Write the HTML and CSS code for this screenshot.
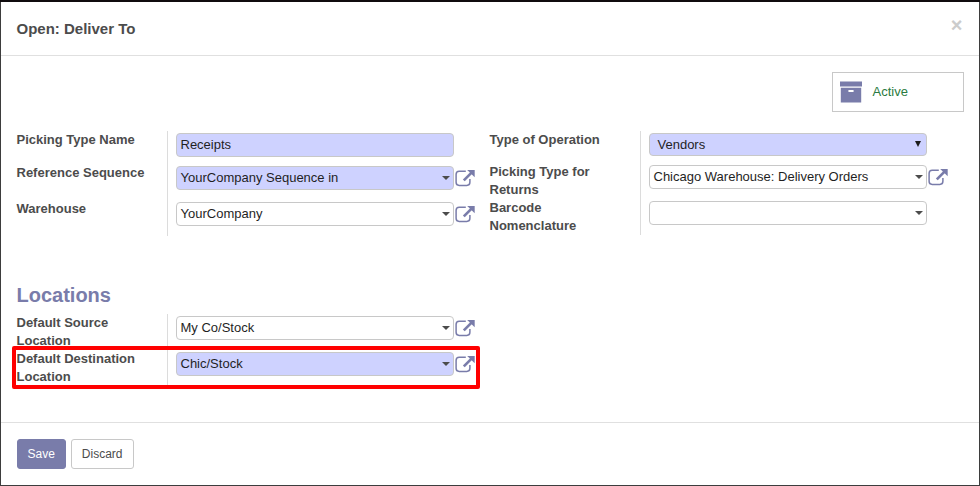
FILE: index.html
```html
<!DOCTYPE html>
<html lang="en">
<head>
<meta charset="utf-8">
<title>Open: Deliver To</title>
<link rel="stylesheet" href="styles.css">
</head>
<body>
<svg class="defs" width="0" height="0">
  <symbol id="ext" viewBox="0 0 20 18">
    <path d="M10.8 2.3H4.2Q1.1 2.3 1.1 5.4V13.3Q1.1 16.4 4.2 16.4H11.8Q14.9 16.4 14.9 13.3V10" fill="none" stroke="#797caa" stroke-width="1.5"/>
    <path d="M8.8 11.4L16.8 3.4" fill="none" stroke="#797caa" stroke-width="2.6"/>
    <path d="M12.2 .9H19.7V8.2Z" fill="#797caa"/>
  </symbol>
</svg>
<div class="modal">
  <header class="modal-header">
    <h1>Open: Deliver To</h1>
    <span class="close">×</span>
  </header>
  <main class="modal-body">
    <div class="button-box">
      <div class="stat">
        <svg width="22" height="22" viewBox="0 0 22 22"><path d="M0 .5H22V5.5H0Z M.8 6.7H21.2V21.5H.8Z" fill="#797caa"/><rect x="8.2" y="9" width="5.6" height="2" rx=".9" fill="#fff"/></svg>
        <span>Active</span>
      </div>
    </div>
    <div class="groups">
      <div class="group">
        <div class="row short"><label>Picking Type Name</label><div class="cell"><div class="field required">Receipts</div></div></div>
        <div class="row"><label>Reference Sequence</label><div class="cell"><div class="field required drop">YourCompany Sequence in</div><svg class="ext"><use href="#ext"/></svg></div></div>
        <div class="row"><label>Warehouse</label><div class="cell"><div class="field drop">YourCompany</div><svg class="ext"><use href="#ext"/></svg></div></div>
      </div>
      <div class="group">
        <div class="row select-row"><label>Type of Operation</label><div class="cell"><div class="field required select"><span>Vendors</span><svg width="6" height="6" viewBox="0 0 6 6"><path d="M0 0H6L3 6Z" fill="#1c1c1c"/></svg></div></div></div>
        <div class="row"><label>Picking Type for Returns</label><div class="cell"><div class="field drop">Chicago Warehouse: Delivery Orders</div><svg class="ext"><use href="#ext"/></svg></div></div>
        <div class="row"><label>Barcode Nomenclature</label><div class="cell"><div class="field drop"></div></div></div>
      </div>
    </div>
    <h2>Locations</h2>
    <div class="group">
      <div class="row"><label>Default Source Location</label><div class="cell"><div class="field drop">My Co/Stock</div><svg class="ext"><use href="#ext"/></svg></div></div>
      <div class="row marked"><label>Default Destination Location</label><div class="cell"><div class="field required drop">Chic/Stock</div><svg class="ext"><use href="#ext"/></svg></div></div>
    </div>
  </main>
  <footer class="modal-footer">
    <button class="btn primary">Save</button>
    <button class="btn">Discard</button>
  </footer>
</div>
</body>
</html>
```
FILE: styles.css
```css
*, *::after { box-sizing: border-box; }
body {
  margin: 0;
  height: 486px;
  padding: 2px 1px 1px;
  background: linear-gradient(#100c0e 0 2px, #3d3d3d 2px);
  font: 13px/18px "Liberation Sans", Arial, sans-serif;
  color: #4c4c4c;
  overflow: hidden;
}
.defs { position: absolute; }
.modal {
  height: 483px;
  background: #fff;
  display: flex;
  flex-direction: column;
}
.modal-header {
  height: 54px;
  flex: none;
  display: flex;
  align-items: center;
  justify-content: space-between;
  padding: 0 16.5px 0 15.5px;
  border-bottom: 1px solid #e0e0e0;
}
h1 { margin: 0; font-size: 15px; line-height: 20px; }
.close {
  font-size: 20px;
  line-height: 20px;
  font-weight: bold;
  color: #ccc;
  margin-bottom: 7px;
}
.modal-body { flex: 1; padding: 16px 15px 0 15.5px; }
.button-box { display: flex; justify-content: flex-end; height: 59px; }
.stat {
  width: 132px;
  height: 40px;
  border: 1px solid #c8c8c8;
  display: flex;
  align-items: center;
  gap: 10.5px;
  padding-left: 7px;
  color: #2a7b41;
}
.groups { display: flex; height: 153px; align-items: flex-start; }
.group { width: 473px; }
.row { display: flex; height: 36px; }
.short { height: 33px; }
.select-row { height: 32px; }
label { width: 150.5px; padding-right: 14px; font-weight: bold; }
.cell {
  flex: 1;
  display: flex;
  align-items: flex-start;
  border-left: 1px solid #dcdcdc;
  padding: 2px 0 0 8px;
}
.field {
  position: relative;
  width: 278px;
  height: 24px;
  border: 1px solid #c8c8c8;
  border-radius: 4px;
  padding: 0 3.5px;
  line-height: 22px;
  color: #1f1f1f;
  background: #fff;
}
.required { background: #ced2ff; }
.drop::after {
  content: "";
  position: absolute;
  right: 3px;
  top: 9px;
  border: 4px solid transparent;
  border-top-color: #4c4c4c;
  border-bottom: 0;
}
.select {
  height: 23px;
  display: flex;
  justify-content: space-between;
  padding: 0 5px 0 7.5px;
}
.select svg { margin-top: 7px; }
.ext { width: 20px; height: 18px; margin: 3px 0 0 1px; }
h2 { margin: 0; height: 30px; font-size: 20px; line-height: 22px; color: #797caa; }
.marked { position: relative; }
.marked::after {
  content: "";
  position: absolute;
  left: -4.5px;
  top: -4px;
  width: 468px;
  height: 43px;
  border: 4px solid #f00;
  border-radius: 2px;
}
.modal-footer {
  height: 63px;
  flex: none;
  display: flex;
  gap: 5px;
  padding: 16px 16px 0;
  border-top: 1px solid #e0e0e0;
}
.btn {
  height: 30px;
  border: 1px solid #c8c8c8;
  border-radius: 3px;
  background: #fff;
  color: #4c4c4c;
  font: 12px/18px "Liberation Sans", Arial, sans-serif;
  padding: 0 10.5px 0 9.5px;
}
.primary { background: #797caa; border-color: #797caa; color: #fff; }
```
